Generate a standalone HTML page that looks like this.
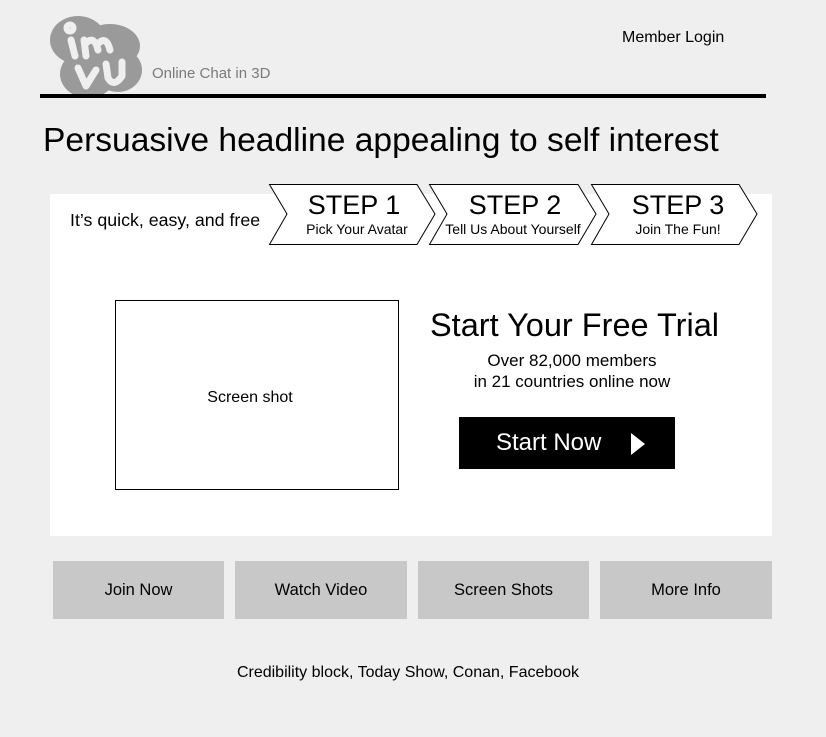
<!DOCTYPE html>
<html><head><meta charset="utf-8"><style>
*{margin:0;padding:0;box-sizing:border-box}
body{width:826px;height:737px;background:#efefef;font-family:"Liberation Sans",Arial,sans-serif;color:#000;position:relative;overflow:hidden}
.a{position:absolute;white-space:nowrap}
.btn{position:absolute;top:561px;height:58px;background:#c8c8c8;font-size:16.5px;display:flex;align-items:center;justify-content:center}
</style></head><body>
<svg class="a" style="left:48px;top:12px" width="96" height="88" viewBox="0 0 96 88">
<g fill="#9a9a9a">
<ellipse cx="30" cy="28" rx="28" ry="24"/><ellipse cx="62" cy="34" rx="30" ry="22"/>
<ellipse cx="40" cy="62" rx="28" ry="24"/><ellipse cx="70" cy="58" rx="24" ry="22"/>
</g>
<g fill="none" stroke="#efefef" stroke-width="7" stroke-linecap="round" stroke-linejoin="round">
<circle cx="22" cy="16" r="3"/>
<path d="M23 28 L27 44"/>
<path d="M38 44 L36 28 M37 32 Q46 22 50 38 M49 33 Q58 22 62 38"/>
<path d="M30 56 L38 74 L48 58"/>
<path d="M58 52 L60 66 Q66 76 74 64 L74 50"/>
</g>
</svg>
<div class="a" style="left:152px;top:65px;font-size:15px;color:#7a7a7a">Online Chat in 3D</div>
<div class="a" style="left:622px;top:29px;font-size:16px">Member Login</div>
<div class="a" style="left:40px;top:94px;width:726px;height:4px;background:#000"></div>
<div class="a" style="left:43px;top:122px;font-size:33.6px">Persuasive headline appealing to self interest</div>
<div class="a" style="left:50px;top:194px;width:722px;height:342px;background:#fff"></div>
<div class="a" style="left:70px;top:210px;font-size:17.8px">It’s quick, easy, and free</div>
<svg class="a" style="left:0;top:0" width="826" height="260">
<g fill="#fff" stroke="#000" stroke-width="1">
<path d="M269.5 184.5 H417 L435 214 L417 244.5 H269.5 L287 214 Z"/>
<path d="M429.5 184.5 H578 L596 214 L578 244.5 H429.5 L447 214 Z"/>
<path d="M591.5 184.5 H739 L757 214 L739 244.5 H591.5 L609 214 Z"/>
</g></svg>
<div class="a" style="left:284px;width:140px;text-align:center;top:190px;font-size:27px">STEP 1</div>
<div class="a" style="left:287px;width:140px;text-align:center;top:221px;font-size:14px">Pick Your Avatar</div>
<div class="a" style="left:445px;width:140px;text-align:center;top:190px;font-size:27px">STEP 2</div>
<div class="a" style="left:433px;width:160px;text-align:center;top:221px;font-size:14px">Tell Us About Yourself</div>
<div class="a" style="left:608px;width:140px;text-align:center;top:190px;font-size:27px">STEP 3</div>
<div class="a" style="left:608px;width:140px;text-align:center;top:221px;font-size:14px">Join The Fun!</div>
<div class="a" style="left:115px;top:300px;width:284px;height:190px;border:1px solid #000"></div>
<div class="a" style="left:115px;width:270px;text-align:center;top:389px;font-size:16px">Screen shot</div>
<div class="a" style="left:430px;top:307px;font-size:32.5px">Start Your Free Trial</div>
<div class="a" style="left:422px;width:300px;text-align:center;top:350px;font-size:17px;line-height:21px">Over 82,000 members<br>in 21 countries online now</div>
<div class="a" style="left:459px;top:417px;width:216px;height:52px;background:#000"></div>
<div class="a" style="left:496px;top:429px;font-size:24px;color:#fff">Start Now</div>
<svg class="a" style="left:630px;top:432px" width="16" height="24"><path d="M1 1 L15 12 L1 23 Z" fill="#fff"/></svg>
<div class="btn" style="left:53px;width:171px">Join Now</div>
<div class="btn" style="left:235px;width:172px">Watch Video</div>
<div class="btn" style="left:418px;width:171px">Screen Shots</div>
<div class="btn" style="left:600px;width:172px">More Info</div>
<div class="a" style="left:0;width:816px;text-align:center;top:664px;font-size:16px">Credibility block, Today Show, Conan, Facebook</div>
</body></html>
